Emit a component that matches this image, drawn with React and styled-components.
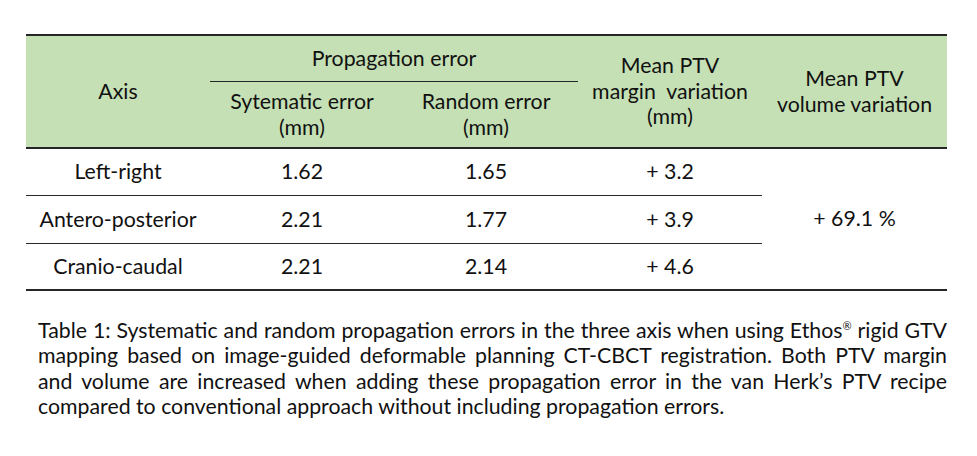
import styled, { createGlobalStyle } from "styled-components";

const GlobalStyle = createGlobalStyle`
  body {
    margin: 0;
    background: #ffffff;
    font-family: Lato, "Open Sans", sans-serif;
    color: #111111;
  }
`;

const Page = styled.div`
  width: 977px;
  height: 456px;
  padding: 34px 0 0 26px;
  box-sizing: border-box;
`;

const Table = styled.table`
  width: 921px;
  table-layout: fixed;
  border-collapse: separate;
  border-spacing: 0;
  border-top: 2px solid #262626;
  font-size: 21.3px;
  line-height: 25.5px;
`;

const Head = styled.thead`
  background: #c5e0b4;
`;

const Row = styled.tr`
  height: ${({ h }) => h}px;
`;

const HeadCell = styled.th`
  font-weight: 400;
  text-align: center;
  vertical-align: middle;
  padding: 0;
  border-bottom: ${({ under }) => (under ? "1.5px solid #262626" : "none")};
  ${({ last }) => last && "border-bottom: 2px solid #262626;"}
`;

const Cell = styled.td`
  text-align: center;
  vertical-align: middle;
  padding: 0;
  border-bottom: ${({ edge }) =>
    edge ? "2px solid #262626" : "1.5px solid #262626"};
`;

const Caption = styled.div`
  width: 909px;
  margin: 27px 0 0 12px;
  font-size: 21.3px;
  line-height: 25.4px;
`;

const CaptionLine = styled.span`
  display: block;
  text-align: justify;
  text-align-last: ${({ end }) => (end ? "left" : "justify")};

  sup {
    font-size: 11px;
    line-height: 0;
  }
`;

const rows = [
  { axis: "Left-right", sys: "1.62", rnd: "1.65", margin: "+ 3.2", h: 47 },
  { axis: "Antero-posterior", sys: "2.21", rnd: "1.77", margin: "+ 3.9", h: 48 },
  { axis: "Cranio-caudal", sys: "2.21", rnd: "2.14", margin: "+ 4.6", h: 47 },
];

export default function App() {
  return (
    <Page>
      <GlobalStyle />
      <Table>
        <colgroup>
          <col style={{ width: 184 }} />
          <col style={{ width: 184 }} />
          <col style={{ width: 184 }} />
          <col style={{ width: 184 }} />
          <col style={{ width: 185 }} />
        </colgroup>
        <Head>
          <Row h={46}>
            <HeadCell rowSpan={2} last>Axis</HeadCell>
            <HeadCell colSpan={2} under>Propagation error</HeadCell>
            <HeadCell rowSpan={2} last>
              Mean PTV
              <br />
              margin&nbsp; variation
              <br />
              (mm)
            </HeadCell>
            <HeadCell rowSpan={2} last>
              Mean PTV
              <br />
              volume variation
            </HeadCell>
          </Row>
          <Row h={67}>
            <HeadCell last>
              Sytematic error
              <br />
              (mm)
            </HeadCell>
            <HeadCell last>
              Random error
              <br />
              (mm)
            </HeadCell>
          </Row>
        </Head>
        <tbody>
          {rows.map((r, i) => {
            const edge = i === rows.length - 1;
            return (
              <Row h={r.h} key={r.axis}>
                <Cell edge={edge}>{r.axis}</Cell>
                <Cell edge={edge}>{r.sys}</Cell>
                <Cell edge={edge}>{r.rnd}</Cell>
                <Cell edge={edge}>{r.margin}</Cell>
                {i === 0 && (
                  <Cell rowSpan={3} edge>
                    + 69.1 %
                  </Cell>
                )}
              </Row>
            );
          })}
        </tbody>
      </Table>
      <Caption>
        <CaptionLine>
          Table 1: Systematic and random propagation errors in the three axis when using Ethos<sup>®</sup> rigid GTV
        </CaptionLine>
        <CaptionLine>
          mapping based on image-guided deformable planning CT-CBCT registration. Both PTV margin
        </CaptionLine>
        <CaptionLine>
          and volume are increased when adding these propagation error in the van Herk’s PTV recipe
        </CaptionLine>
        <CaptionLine end>
          compared to conventional approach without including propagation errors.
        </CaptionLine>
      </Caption>
    </Page>
  );
}
